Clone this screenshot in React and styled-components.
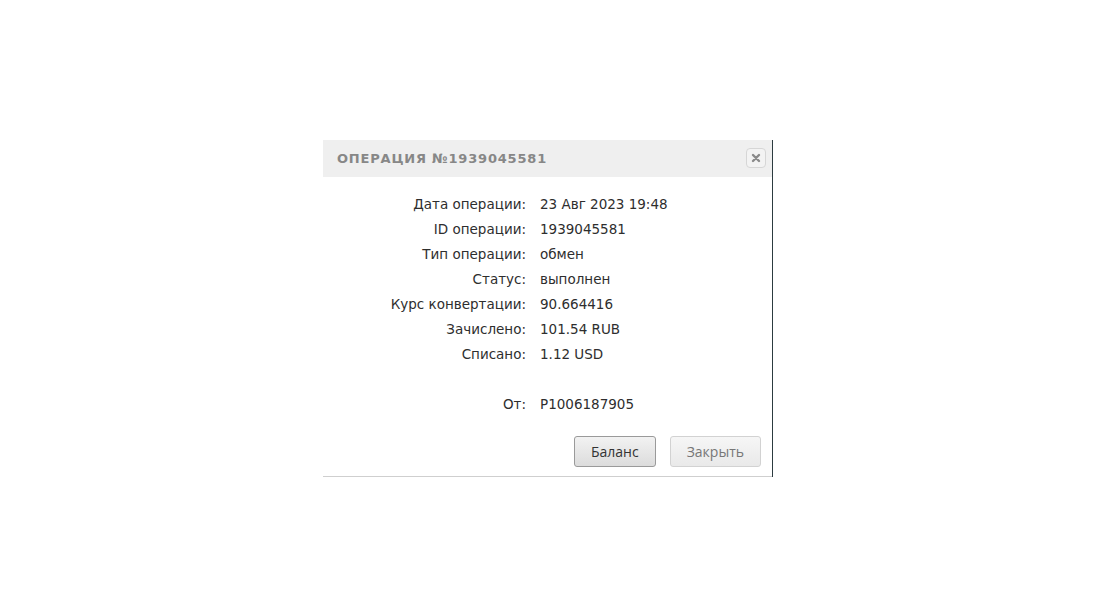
import React from 'react';
import styled, { createGlobalStyle } from 'styled-components';

const GlobalStyle = createGlobalStyle`
  html, body {
    margin: 0;
    padding: 0;
    background: #fff;
  }
  body {
    font-family: "DejaVu Sans", sans-serif;
  }
`;

const Page = styled.div`
  min-height: 100vh;
  display: flex;
  align-items: center;
  justify-content: center;
`;

const Dialog = styled.section`
  width: 449px;
  background: #fff;
  border-right: 1px solid #2c3b40;
  display: flex;
  flex-direction: column;
`;

const Header = styled.header`
  height: 37px;
  background: #efefef;
  display: flex;
  align-items: center;
  justify-content: space-between;
  padding: 0 6px 0 14px;
`;

const Title = styled.h2`
  margin: 0;
  font-family: "DejaVu Sans", sans-serif;
  font-size: 13px;
  font-weight: bold;
  letter-spacing: 0.8px;
  color: #878787;
  text-transform: uppercase;
`;

const CloseButton = styled.button`
  width: 20px;
  height: 20px;
  padding: 0;
  border: 1px solid #d6d6d6;
  border-radius: 4px;
  background: #f3f3f3;
  display: flex;
  align-items: center;
  justify-content: center;
  cursor: pointer;
`;

const Body = styled.div`
  padding: 15px 11px 0 0;
  border-bottom: 1px solid #cfcfcf;
`;

const Details = styled.dl`
  margin: 0;
  display: grid;
  grid-template-columns: 203px 1fr;
  column-gap: 14px;
  font-size: 13.5px;
  line-height: 25px;
  color: #2e2e2e;
`;

const Label = styled.dt`
  text-align: right;
`;

const Value = styled.dd`
  margin: 0;
`;

const Spacer = styled.div`
  grid-column: 1 / -1;
  height: 25px;
`;

const Actions = styled.div`
  display: flex;
  justify-content: flex-end;
  gap: 14px;
  padding: 19px 0 9px;
`;

const Button = styled.button`
  height: 31px;
  padding: 0 16px;
  font-family: "Open Sans", sans-serif;
  font-size: 14px;
  border-radius: 3px;
  border: 1px solid ${p => (p.$muted ? '#d2d2d2' : '#9a9a9a')};
  color: ${p => (p.$muted ? '#777' : '#333')};
  background: ${p => (p.$muted
    ? 'linear-gradient(#f6f6f6, #e9e9e9)'
    : 'linear-gradient(#f2f2f2, #dcdcdc)')};
  cursor: pointer;
`;

const rows = [
  ['Дата операции:', '23 Авг 2023 19:48'],
  ['ID операции:', '1939045581'],
  ['Тип операции:', 'обмен'],
  ['Статус:', 'выполнен'],
  ['Курс конвертации:', '90.664416'],
  ['Зачислено:', '101.54 RUB'],
  ['Списано:', '1.12 USD'],
];

export default function App() {
  return (
    <>
      <GlobalStyle />
      <Page>
        <Dialog>
          <Header>
            <Title>Операция №1939045581</Title>
            <CloseButton aria-label="close">
              <svg width="10" height="10" viewBox="0 0 10 10">
                <path d="M2 2 L8 8 M8 2 L2 8" stroke="#8a8a8a" strokeWidth="2.4" strokeLinecap="round" />
              </svg>
            </CloseButton>
          </Header>
          <Body>
            <Details>
              {rows.map(([label, value]) => (
                <React.Fragment key={label}>
                  <Label>{label}</Label>
                  <Value>{value}</Value>
                </React.Fragment>
              ))}
              <Spacer />
              <Label>От:</Label>
              <Value>P1006187905</Value>
            </Details>
            <Actions>
              <Button>Баланс</Button>
              <Button $muted>Закрыть</Button>
            </Actions>
          </Body>
        </Dialog>
      </Page>
    </>
  );
}
